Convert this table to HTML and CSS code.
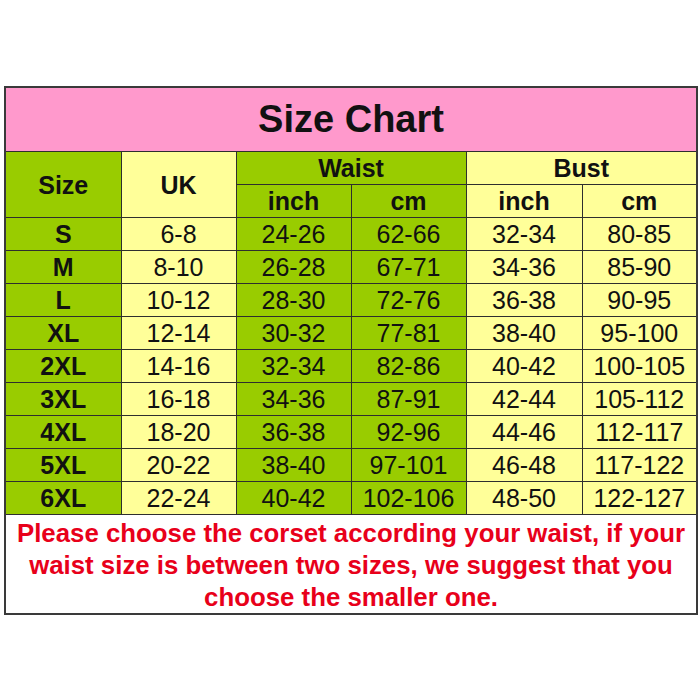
FILE: index.html
```html
<!DOCTYPE html>
<html>
<head>
<meta charset="utf-8">
<link rel="stylesheet" href="styles.css">
</head>
<body>
<div class="page">
<table class="chart">
  <colgroup>
    <col class="c1"><col class="c2"><col class="c3"><col class="c4"><col class="c5"><col class="c6">
  </colgroup>
  <tr class="title-row"><td colspan="6" class="title">Size Chart</td></tr>
  <tr class="hrow">
    <td rowspan="2" class="g b">Size</td>
    <td rowspan="2" class="y b">UK</td>
    <td colspan="2" class="g b">Waist</td>
    <td colspan="2" class="y b">Bust</td>
  </tr>
  <tr class="hrow">
    <td class="g b">inch</td><td class="g b">cm</td>
    <td class="y b">inch</td><td class="y b">cm</td>
  </tr>
  <tr><td class="g b">S</td><td class="y">6-8</td><td class="g">24-26</td><td class="g">62-66</td><td class="y">32-34</td><td class="y">80-85</td></tr>
  <tr><td class="g b">M</td><td class="y">8-10</td><td class="g">26-28</td><td class="g">67-71</td><td class="y">34-36</td><td class="y">85-90</td></tr>
  <tr><td class="g b">L</td><td class="y">10-12</td><td class="g">28-30</td><td class="g">72-76</td><td class="y">36-38</td><td class="y">90-95</td></tr>
  <tr><td class="g b">XL</td><td class="y">12-14</td><td class="g">30-32</td><td class="g">77-81</td><td class="y">38-40</td><td class="y">95-100</td></tr>
  <tr><td class="g b">2XL</td><td class="y">14-16</td><td class="g">32-34</td><td class="g">82-86</td><td class="y">40-42</td><td class="y">100-105</td></tr>
  <tr><td class="g b">3XL</td><td class="y">16-18</td><td class="g">34-36</td><td class="g">87-91</td><td class="y">42-44</td><td class="y">105-112</td></tr>
  <tr><td class="g b">4XL</td><td class="y">18-20</td><td class="g">36-38</td><td class="g">92-96</td><td class="y">44-46</td><td class="y">112-117</td></tr>
  <tr><td class="g b">5XL</td><td class="y">20-22</td><td class="g">38-40</td><td class="g">97-101</td><td class="y">46-48</td><td class="y">117-122</td></tr>
  <tr><td class="g b">6XL</td><td class="y">22-24</td><td class="g">40-42</td><td class="g">102-106</td><td class="y">48-50</td><td class="y">122-127</td></tr>
  <tr class="note-row"><td colspan="6" class="note">Please choose the corset according your waist, if your<br>waist size is between two sizes, we suggest that you<br>choose the smaller one.</td></tr>
</table>
</div>
</body>
</html>
```
FILE: styles.css
```css
html, body {
  margin: 0;
  padding: 0;
  background: #ffffff;
}
.page {
  padding: 86px 4px 0 4px;
}
.chart {
  width: 692px;
  border-collapse: collapse;
  table-layout: fixed;
  font-family: "Liberation Sans", Arial, sans-serif;
  color: #111;
  border: 2px solid #3a3a3a;
}
.c1 { width: 116px; }
.c2 { width: 115px; }
.c3 { width: 115px; }
.c4 { width: 115px; }
.c5 { width: 116px; }
.c6 { width: 115px; }
.chart td {
  border: 1px solid #2e2e2e;
  text-align: center;
  vertical-align: middle;
  height: 32px;
  padding: 0;
  font-size: 25px;
  line-height: 32px;
}
.chart td.title {
  background: #ff99cc;
  height: 63px;
  font-size: 38px;
  font-weight: bold;
  line-height: 63px;
}
.g { background: #99cc00; }
.y { background: #ffff99; }
.b { font-weight: bold; }
.chart td.note {
  background: #ffffff;
  color: #e8001a;
  font-weight: bold;
  font-size: 25.8px;
  line-height: 32px;
  height: 94px;
  padding: 2px 0 0 0;
  vertical-align: top;
}
```
